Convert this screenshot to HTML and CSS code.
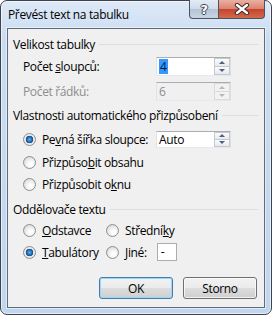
FILE: index.html
```html
<!DOCTYPE html>
<html lang="cs">

<head>
    <meta charset="UTF-8">
    <meta name="viewport" content="width=device-width, initial-scale=1.0">
    <title>Převést text na tabulku</title>
    <link rel="stylesheet" href="styles.css">
</head>

<body>

    <div class="window">
        <div class="titlebar">
            <span class="title">Převést text na tabulku</span>
            <div class="caption">
                <span class="cap-btn help">?</span>
                <span class="cap-btn close">
                    <svg width="16" height="12" viewBox="0 0 16 12">
                        <path d="M3 2 L13 10 M13 2 L3 10" stroke="#3a2a28" stroke-width="4.4" stroke-linecap="round" />
                        <path d="M3 2 L13 10 M13 2 L3 10" stroke="#fff" stroke-width="2.4" stroke-linecap="round" />
                    </svg>
                </span>
            </div>
        </div>

        <div class="client">
            <!-- Velikost tabulky -->
            <div class="group-head head-1">Velikost tabulky</div>
            <div class="row spin-row row-cols">
                <span class="label">Počet <u>s</u>loupců:</span>
                <div class="spin">
                    <span class="value"><span class="sel">4</span></span>
                    <span class="arrows"><span class="up"></span><span class="down"></span></span>
                </div>
            </div>
            <div class="row spin-row row-rows disabled">
                <span class="label">Počet řádků:</span>
                <div class="spin">
                    <span class="value">6</span>
                    <span class="arrows"><span class="up"></span><span class="down"></span></span>
                </div>
            </div>

            <!-- Vlastnosti automatického přizpůsobení -->
            <div class="group-head head-2">Vlastnosti automatického přizpůsobení</div>
            <div class="row radio-row row-fixed">
                <span class="option wide"><span class="radio checked"></span>Pe<u>v</u>ná šířka sloupce:</span>
                <div class="spin small">
                    <span class="value">Auto</span>
                    <span class="arrows"><span class="up"></span><span class="down"></span></span>
                </div>
            </div>
            <div class="row radio-row row-content">
                <span class="option"><span class="radio"></span>Přizpůso<u>b</u>it obsahu</span>
            </div>
            <div class="row radio-row">
                <span class="option"><span class="radio"></span>Přizpůsobit o<u>k</u>nu</span>
            </div>

            <!-- Oddělovače textu -->
            <div class="group-head head-3">Oddělovače textu</div>
            <div class="row radio-row">
                <span class="option col"><span class="radio"></span><u>O</u>dstavce</span>
                <span class="option"><span class="radio"></span>Střední<u>k</u>y</span>
            </div>
            <div class="row radio-row">
                <span class="option col"><span class="radio checked"></span><u>T</u>abulátory</span>
                <span class="option"><span class="radio"></span><u>J</u>iné:</span>
                <span class="other">-</span>
            </div>

            <div class="buttons">
                <span class="btn default">OK</span>
                <span class="btn">Storno</span>
            </div>
        </div>
    </div>

</body>

</html>
```

FILE: styles.css
```css
body {
    margin: 0;
    padding: 0;
    background-color: #fff;
    font-family: "Open Sans", "Noto Sans", sans-serif;
    font-size: 12px;
    letter-spacing: -0.35px;
    color: #000;
}

/* Okno s rámem ve stylu Windows 7 */
.window {
    width: 272px;
    height: 315px;
    box-sizing: border-box;
    display: flex;
    flex-direction: column;
    border: 1px solid #3d434c;
    border-radius: 7px;
    background: linear-gradient(#dde9f7, #c9dcf2 40px, #c0d6ef);
    box-shadow: inset 0 0 0 1px rgba(255, 255, 255, 0.6);
}

.titlebar {
    height: 27px;
    display: flex;
    align-items: flex-start;
}

.title {
    padding-left: 7px;
    line-height: 28px;
    font-size: 12px;
}

/* Tlačítka v titulku */
.caption {
    display: flex;
    margin-left: auto;
    margin-right: 6px;
    margin-top: -1px;
}

.cap-btn {
    height: 18px;
    display: flex;
    align-items: center;
    justify-content: center;
    border: 1px solid #4b5361;
    border-top: none;
    box-sizing: content-box;
}

.help {
    width: 28px;
    border-radius: 0 0 0 4px;
    background: linear-gradient(#e3ebf4, #d0dbe7 50%, #b3c3d5 51%, #c8d5e3);
    color: #fff;
    font-family: "DejaVu Sans", sans-serif;
    font-weight: bold;
    font-size: 13px;
    text-shadow: -1px 0 #3a4656, 1px 0 #3a4656, 0 -1px #3a4656, 0 1px #3a4656;
}

.close {
    width: 45px;
    border-left: none;
    border-radius: 0 0 4px 0;
    background: linear-gradient(#eab0a3, #d9826f 50%, #c7432b 51%, #d26a4e);
}

/* Klientská oblast */
.client {
    flex: 1;
    margin: 0 6px 6px 6px;
    border: 1px solid #5f6b7a;
    background-color: #f0f0f0;
    box-shadow: 0 0 0 1px rgba(255, 255, 255, 0.5);
    display: flex;
    flex-direction: column;
}

.group-head {
    height: 22px;
    display: flex;
    align-items: center;
    padding-left: 5px;
    padding-right: 6px;
}

.group-head::after {
    content: "";
    flex: 1;
    height: 1px;
    margin-left: 4px;
    background-color: #d5dfe5;
}

.head-1 {
    margin-top: 4px;
}

.head-2 {
    margin-top: 2px;
}

.head-3 {
    margin-top: 4px;
    height: 20px;
}

.row {
    display: flex;
    align-items: center;
    padding-left: 15px;
}

.spin-row {
    height: 21px;
}

.row-cols {
    margin-top: 1px;
}

.row-rows {
    margin-top: 4px;
}

.label {
    width: 133px;
}

.disabled .label {
    color: #8d8d8d;
}

/* Číselné pole se šipkami */
.spin {
    width: 75px;
    height: 19px;
    box-sizing: border-box;
    display: flex;
    border: 1px solid #abadb3;
    border-left-color: #e2e3ea;
    border-right-color: #dbdfe6;
    border-bottom-color: #e3e9ef;
    background-color: #fff;
}

.spin.small {
    height: 17px;
}

.value {
    flex: 1;
    display: flex;
    align-items: center;
    padding-left: 2px;
}

.sel {
    background-color: #3399ff;
    color: #0a1a40;
    padding: 0 1px;
    line-height: 15px;
}

.disabled .spin {
    background-color: #f0f0f0;
}

.disabled .value {
    color: #8d8d8d;
}

.arrows {
    width: 16px;
    display: flex;
    flex-direction: column;
}

.up,
.down {
    flex: 1;
    display: flex;
    align-items: center;
    justify-content: center;
    border: 1px solid #c5c9ce;
    background: linear-gradient(#fbfbfb, #e7e9ec);
}

.down {
    border-top: none;
}

.up::before,
.down::before {
    content: "";
    border-left: 3px solid transparent;
    border-right: 3px solid transparent;
}

.up::before {
    border-bottom: 3px solid #4d6185;
}

.down::before {
    border-top: 3px solid #4d6185;
}

.disabled .up,
.disabled .down {
    border-color: #dadada;
    background: #f2f2f2;
}

.disabled .up::before {
    border-bottom-color: #b8b8b8;
}

.disabled .down::before {
    border-top-color: #b8b8b8;
}

/* Přepínače */
.radio-row {
    height: 22px;
}

.row-fixed {
    margin-top: 2px;
}

.row-content {
    margin-top: 1px;
}

.option {
    display: flex;
    align-items: center;
}

.option.wide {
    width: 133px;
}

.option.col {
    width: 83px;
}

.radio {
    width: 11px;
    height: 11px;
    margin-right: 6px;
    border: 1px solid #8e8f8f;
    border-radius: 50%;
    background: radial-gradient(circle at 60% 65%, #fdfdfd 20%, #e6e6e6 60%, #c9c9c9);
}

.radio.checked {
    background: radial-gradient(circle at 50% 50%, #5fb7ef 0, #1c6bb0 2.5px, #164e86 3.5px, #e4e4e4 4px, #f6f6f6);
}

.other {
    width: 15px;
    height: 16px;
    margin-left: 10px;
    border: 1px solid #abadb3;
    background-color: #fff;
    padding-left: 3px;
    box-sizing: content-box;
    line-height: 16px;
}

/* Tlačítka OK / Storno */
.buttons {
    display: flex;
    justify-content: flex-end;
    gap: 10px;
    margin-top: 14px;
    padding-right: 7px;
}

.btn {
    width: 74px;
    height: 22px;
    box-sizing: border-box;
    display: flex;
    align-items: center;
    justify-content: center;
    border: 1px solid #707070;
    border-radius: 3px;
    background: linear-gradient(#f2f2f2, #ebebeb 50%, #dddddd 51%, #cfcfcf);
    box-shadow: inset 0 0 0 1px rgba(255, 255, 255, 0.7);
}

.btn.default {
    border-color: #3c7fb1;
    box-shadow: inset 0 0 0 1px #9ed6f5;
}
```
